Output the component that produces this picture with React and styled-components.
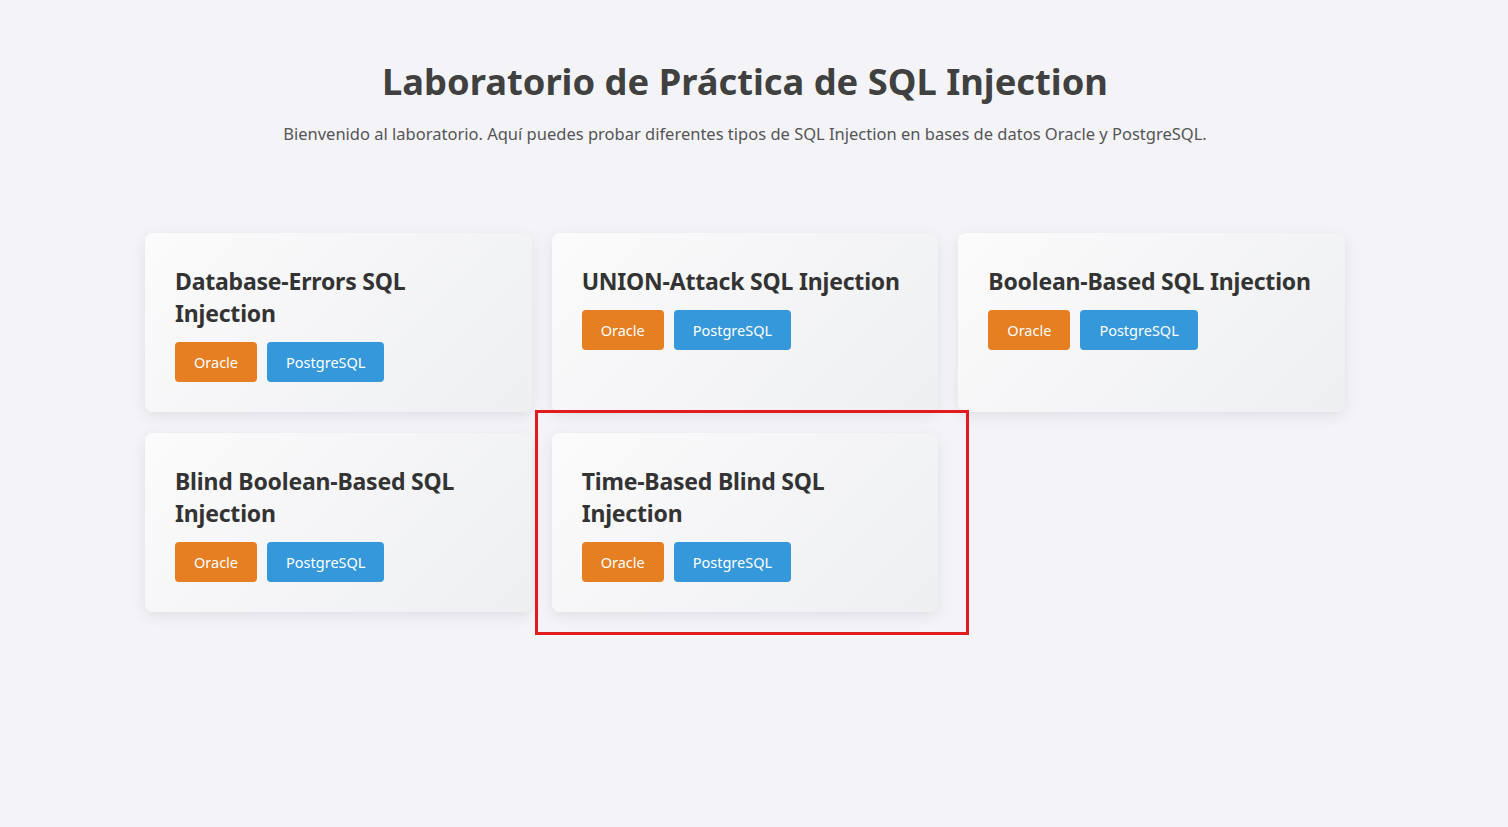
import React from "react";
import styled, { createGlobalStyle } from "styled-components";

const GlobalStyle = createGlobalStyle`
  body {
    margin: 0;
    background: #f4f4f8;
    font-family: "Noto Sans", "Open Sans", sans-serif;
  }
`;

const Page = styled.div`
  width: calc(100% - 18px);
  min-height: 827px;
  padding-top: 55px;
  box-sizing: border-box;
`;

const Header = styled.header`
  text-align: center;
`;

const Title = styled.h1`
  margin: 0;
  font-size: 36.3px;
  font-weight: 700;
  color: #404040;
  line-height: 52px;
`;

const Intro = styled.p`
  margin: 15px 0 0;
  font-size: 16.5px;
  color: #555;
  line-height: 24px;
`;

const Grid = styled.div`
  width: 1200px;
  margin: 87px auto 0;
  display: grid;
  grid-template-columns: repeat(3, 1fr);
  column-gap: 20px;
  row-gap: 21px;
`;

const Card = styled.div`
  position: relative;
  padding: 32px 30px 30px;
  border-radius: 8px;
  background: linear-gradient(135deg, #fbfbfc 0%, #eeeff1 100%);
  box-shadow: 0 4px 14px rgba(40, 40, 70, 0.1);
`;

const Highlight = styled.div`
  position: absolute;
  left: -17px;
  top: -23px;
  right: -31px;
  bottom: -23px;
  border: 3px solid #e21b1f;
  pointer-events: none;
`;

const CardTitle = styled.h2`
  margin: 0 0 13px;
  font-size: 23px;
  letter-spacing: -0.2px;
  line-height: 32px;
  font-weight: 700;
  color: #333;
`;

const Buttons = styled.div`
  display: flex;
  gap: 10px;
`;

const Button = styled.button`
  height: 40px;
  padding: 0 19px;
  border: none;
  border-radius: 4px;
  background: ${(p) => (p.$db === "oracle" ? "#e67e22" : "#3498db")};
  color: #fff;
  font-family: inherit;
  font-size: 14.5px;
  cursor: pointer;
`;

const labs = [
  "Database-Errors SQL Injection",
  "UNION-Attack SQL Injection",
  "Boolean-Based SQL Injection",
  "Blind Boolean-Based SQL Injection",
  "Time-Based Blind SQL Injection",
];

export default function App() {
  return (
    <Page>
      <GlobalStyle />
      <Header>
        <Title>Laboratorio de Práctica de SQL Injection</Title>
        <Intro>
          Bienvenido al laboratorio. Aquí puedes probar diferentes tipos de SQL
          Injection en bases de datos Oracle y PostgreSQL.
        </Intro>
      </Header>
      <Grid>
        {labs.map((name, i) => (
          <Card key={name}>
            <CardTitle>{name}</CardTitle>
            <Buttons>
              <Button $db="oracle">Oracle</Button>
              <Button $db="postgres">PostgreSQL</Button>
            </Buttons>
            {i === 4 && <Highlight />}
          </Card>
        ))}
      </Grid>
    </Page>
  );
}
